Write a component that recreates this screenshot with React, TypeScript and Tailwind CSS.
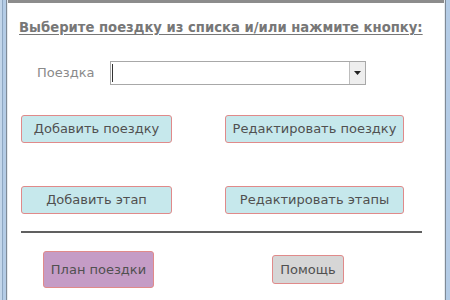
export default function App() {
  const btn =
    "h-[28px] rounded-[3px] border border-[#e08a8a] bg-[#c6e8ec] text-[13px] text-[#505050] flex items-center justify-center";
  return (
    <div className="w-[450px] h-[300px] flex bg-white overflow-hidden font-['DejaVu_Sans',sans-serif]">
      <div className="w-[8px] h-full flex">
        <div className="w-[2px] bg-[#c3d6ea]" />
        <div className="w-[1px] bg-[#8ea7c2]" />
        <div className="w-[3px] bg-[#b4cce6]" />
        <div className="w-[1px] bg-[#7f8a96]" />
        <div className="w-[1px] bg-[#e6ebf0]" />
      </div>
      <div className="flex-1 flex flex-col">
        <div className="h-[3px] bg-[#8c8c8c]" />
        <div className="pl-[11px] pr-[14px]">
          <div className="mt-[15px] text-[13.2px] font-bold text-[#777] underline underline-offset-2 whitespace-nowrap">
            Выберите поездку из списка и/или нажмите кнопку:
          </div>
          <div className="mt-[23px] flex items-center">
            <span className="ml-[18px] w-[73px] text-[13px] text-[#8a8a8a]">Поездка</span>
            <div className="w-[256px] h-[24px] border border-[#a8a8a8] bg-white flex items-stretch">
              <div className="flex-1 flex items-center pl-[1px]">
                <div className="w-[1px] h-[18px] bg-[#333]" />
              </div>
              <div className="w-[16px] border-l border-[#bdbdbd] bg-[#eeeeee] flex items-center justify-center">
                <svg width="7" height="4" viewBox="0 0 7 4">
                  <path d="M0 0H7L3.5 4Z" fill="#222" />
                </svg>
              </div>
            </div>
          </div>
          <div className="mt-[30px] flex">
            <div className={`${btn} ml-[2px] w-[151px]`}>Добавить поездку</div>
            <div className={`${btn} ml-[53px] w-[179px]`}>Редактировать поездку</div>
          </div>
          <div className="mt-[43px] flex">
            <div className={`${btn} ml-[2px] w-[151px]`}>Добавить этап</div>
            <div className={`${btn} ml-[53px] w-[179px]`}>Редактировать этапы</div>
          </div>
          <div className="mt-[17px] ml-[2px] w-[401px] h-[2px] bg-[#606060]" />
          <div className="flex items-center mt-[18px]">
            <div className="ml-[24px] w-[111px] h-[37px] rounded-[3px] border border-[#e08a8a] bg-[#c59cc6] text-[13px] text-[#505050] flex items-center justify-center">
              План поездки
            </div>
            <div className="ml-[118px] w-[72px] h-[29px] rounded-[3px] border border-[#e08a8a] bg-[#d6d6d6] text-[13px] text-[#505050] flex items-center justify-center">
              Помощь
            </div>
          </div>
        </div>
      </div>
      <div className="w-[6px] h-full flex">
        <div className="w-[1px] bg-[#e6ebf0]" />
        <div className="w-[1px] bg-[#7f8a96]" />
        <div className="w-[4px] bg-[#b4cce6]" />
      </div>
    </div>
  );
}
